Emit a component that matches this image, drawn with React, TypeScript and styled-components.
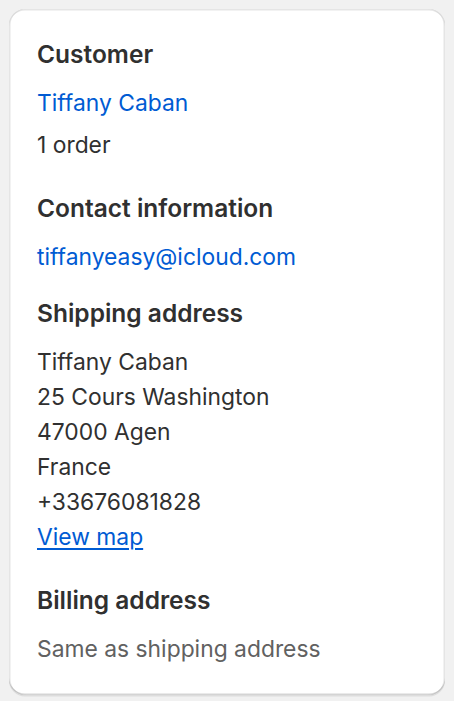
import React from "react";
import styled, { createGlobalStyle } from "styled-components";

const Global = createGlobalStyle`
  html, body { margin: 0; padding: 0; background: #f1f1f1; }
  body { font-family: Inter, "Noto Sans", sans-serif; -webkit-font-smoothing: antialiased; }
`;

const Page = styled.div`
  padding: 9px;
`;

const Card = styled.div`
  background: #fff;
  border-radius: 16px;
  padding: 28px;
  display: flex;
  flex-direction: column;
  gap: 28px;
  box-shadow: 0 1.5px 0 0 rgba(26, 26, 26, 0.09),
    inset 0 1.5px 0 0 rgba(204, 204, 204, 0.5),
    inset 0 -1.5px 0 0 rgba(0, 0, 0, 0.17),
    inset -1.5px 0 0 0 rgba(0, 0, 0, 0.1),
    inset 1.5px 0 0 0 rgba(0, 0, 0, 0.1);
`;

const Section = styled.section<{ $gap: number; $pull?: number }>`
  display: flex;
  flex-direction: column;
  gap: ${(p) => p.$gap}px;
  margin-top: ${(p) => (p.$pull ? -p.$pull : 0)}px;
`;

const Heading = styled.h2`
  margin: 0;
  font-size: 24.5px;
  line-height: 35px;
  font-weight: 600;
  color: #303030;
`;

const Lines = styled.div`
  display: flex;
  flex-direction: column;
  gap: 7px;
`;

const Text = styled.p<{ $tone?: "subdued" }>`
  margin: 0;
  font-size: 22.85px;
  line-height: 35px;
  font-weight: 400;
  color: ${(p) => (p.$tone === "subdued" ? "#616161" : "#303030")};
`;

const Address = styled.div`
  display: flex;
  flex-direction: column;
  font-size: 22.85px;
  line-height: 35px;
  font-weight: 400;
  color: #303030;
`;

const Link = styled.a<{ $underline?: boolean }>`
  font-size: 22.85px;
  line-height: 35px;
  font-weight: 400;
  color: #005bd3;
  text-decoration: ${(p) => (p.$underline ? "underline" : "none")};
  text-underline-offset: 3px;
  text-decoration-thickness: 2px;
  align-self: flex-start;
  cursor: pointer;
`;

export default function App() {
  return (
    <Page>
      <Global />
      <Card>
        <Section $gap={14}>
          <Heading>Customer</Heading>
          <Lines>
            <Link>Tiffany Caban</Link>
            <Text>1 order</Text>
          </Lines>
        </Section>
        <Section $gap={14}>
          <Heading>Contact information</Heading>
          <Link>tiffanyeasy@icloud.com</Link>
        </Section>
        <Section $gap={14} $pull={7}>
          <Heading>Shipping address</Heading>
          <Address>
            <span>Tiffany Caban</span>
            <span>25 Cours Washington</span>
            <span>47000 Agen</span>
            <span>France</span>
            <span>+33676081828</span>
            <Link $underline>View map</Link>
          </Address>
        </Section>
        <Section $gap={14}>
          <Heading>Billing address</Heading>
          <Text $tone="subdued">Same as shipping address</Text>
        </Section>
      </Card>
    </Page>
  );
}
